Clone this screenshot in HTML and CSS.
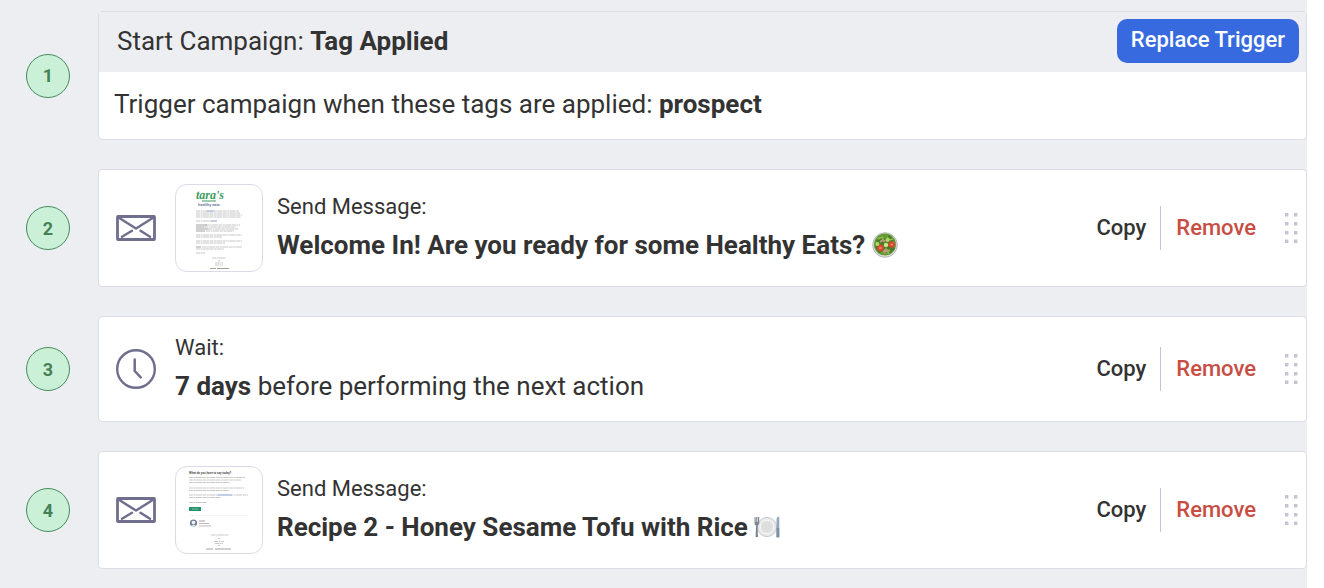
FILE: index.html
```html
<!DOCTYPE html>
<html lang="en">
<head>
  <meta charset="UTF-8">
  <meta name="viewport" content="width=device-width, initial-scale=1.0">
  <title>Campaign Steps</title>
  <link rel="stylesheet" href="styles.css">
</head>
<body>
  <!-- Shared icons -->
  <svg class="sprite" width="0" height="0" aria-hidden="true">
    <symbol id="icon-mail" viewBox="0 0 40 40">
      <rect x="1.5" y="8.5" width="37" height="23" rx="0.5" fill="none" stroke="#706e8e" stroke-width="2.8"/>
      <path d="M2.5 9.5L20 20.5L37.5 9.5M6 28.8L16 22.8M34 28.8L24.5 22.8" fill="none" stroke="#706e8e" stroke-width="2.5" stroke-linecap="round" stroke-linejoin="round"/>
    </symbol>
    <symbol id="icon-clock" viewBox="0 0 40 40">
      <circle cx="20" cy="20" r="18.8" fill="none" stroke="#706e8e" stroke-width="2.4"/>
      <path d="M18.7 10.5V22L24.7 28.3" fill="none" stroke="#706e8e" stroke-width="2.5" stroke-linecap="round" stroke-linejoin="round"/>
    </symbol>
    <symbol id="icon-grip" viewBox="0 0 14 32">
      <path d="M1 1h3.4v3.4h-3.4zM10 1h3.4v3.4h-3.4zM1 10h3.4v3.4h-3.4zM10 10h3.4v3.4h-3.4zM1 19h3.4v3.4h-3.4zM10 19h3.4v3.4h-3.4zM1 27.6h3.4v3.4h-3.4zM10 27.6h3.4v3.4h-3.4z" fill="#c5c4d6"/>
    </symbol>
  </svg>

  <main class="page">
    <ol class="steps">
      <li class="step">
        <span class="step-number">1</span>
        <section class="card">
          <div class="card-header">
            <h2 class="trigger-title">Start Campaign: <strong>Tag Applied</strong></h2>
            <button type="button" class="replace-btn">Replace Trigger</button>
          </div>
          <p class="card-body">Trigger campaign when these tags are applied: <strong>prospect</strong></p>
        </section>
      </li>

      <li class="step">
        <span class="step-number">2</span>
        <section class="card action">
          <svg class="icon" aria-hidden="true"><use href="#icon-mail"/></svg>
          <svg class="thumb" viewBox="0 0 86 86" role="img" aria-label="Message preview">
            <text class="thumb-logo" x="20" y="14">tara's</text>
            <path d="M26 16H40" stroke="#3d9b62" stroke-width="1"/>
            <text class="thumb-tagline" x="22" y="21">healthy eats</text>
            <g stroke="#c6c6c6" stroke-width="1" stroke-dasharray="4 .5 2 .4 6 .5">
              <path d="M20 26H63M20 28H64M20 30H66M20 32H65"/>
              <path d="M20 36H41M29 40H64M28 42H60M32 44H62M30 46H58"/>
              <path d="M20 50H66M20 52H46M20 56H66M20 58H49M26 62H66M20 64H48M20 68H29"/>
              <path d="M36 73H50M42 76H44M39 78H47M39 80H47"/>
            </g>
            <path d="M20 40H31M20 42H28M20 44H32M20 46H29M20 62H25M34 83.5H40M41 83.5H53" stroke="#a2a2a2" stroke-width="1"/>
            <path d="M31 26H38M35 36H41" stroke="#9db4e6" stroke-width="1"/>
          </svg>
          <div class="action-text">
            <p class="action-type">Send Message:</p>
            <p class="action-title">
              <strong>Welcome In! Are you ready for some Healthy Eats?</strong>
              <svg class="emoji" viewBox="0 0 26 26" role="img" aria-label="Green salad">
                <circle cx="13" cy="13" r="12.3" fill="#d9dcde" stroke="#b5b8ba" stroke-width="1"/>
                <circle cx="13" cy="12.5" r="11" fill="#679c35"/>
                <path d="M4 9L9 4L13 7L17 3L22 8L19 12L23 17L17 22L12 19L7 21L3 15L7 12Z" fill="#477b28"/>
                <path d="M6 7L10 5L12 9M15 5L18 8L21 7M11 20L14 17L17 22" fill="none" stroke="#91bd50" stroke-width="1.5"/>
                <path d="M8 10L11 8L13 10M12 21Q14 17 18 19" fill="none" stroke="#b69b78" stroke-width="2"/>
                <circle cx="8.5" cy="16" r="3.4" fill="#d84732"/>
                <circle cx="19.7" cy="12.5" r="3.3" fill="#d84732"/>
                <path d="M7 16H10M18.5 12.5H21" stroke="#f18b70" stroke-width="1.3"/>
                <circle cx="14" cy="13" r="2.2" fill="#c8e986"/>
                <circle cx="5.5" cy="12" r="1.9" fill="#b3da69"/>
                <circle cx="15.5" cy="8" r="2" fill="#b3da69"/>
              </svg>
            </p>
          </div>
          <div class="action-buttons">
            <button type="button" class="copy-btn">Copy</button>
            <button type="button" class="remove-btn">Remove</button>
          </div>
          <svg class="grip" aria-hidden="true"><use href="#icon-grip"/></svg>
        </section>
      </li>

      <li class="step">
        <span class="step-number">3</span>
        <section class="card action">
          <svg class="icon" aria-hidden="true"><use href="#icon-clock"/></svg>
          <div class="action-text">
            <p class="action-type">Wait:</p>
            <p class="action-title"><strong>7 days</strong> before performing the next action</p>
          </div>
          <div class="action-buttons">
            <button type="button" class="copy-btn">Copy</button>
            <button type="button" class="remove-btn">Remove</button>
          </div>
          <svg class="grip" aria-hidden="true"><use href="#icon-grip"/></svg>
        </section>
      </li>

      <li class="step">
        <span class="step-number">4</span>
        <section class="card action">
          <svg class="icon" aria-hidden="true"><use href="#icon-mail"/></svg>
          <svg class="thumb" viewBox="0 0 86 86" role="img" aria-label="Message preview">
            <text class="thumb-heading" x="13" y="7">What do you have to say today?</text>
            <g stroke="#c8c8c8" stroke-width="1" stroke-dasharray="4 .5 2 .4 6 .5">
              <path d="M13 10.5H69M13 13H65M13 15.5H54M13 21H68M13 23.5H53M13 28H72M13 30.5H45M13 35.5H31"/>
              <path d="M35 68H52M42 71.5H44M38 74.5H48M39 76.5H47M42 78.5H44"/>
            </g>
            <path d="M42 28H56" stroke="#9db4e6" stroke-width="1"/>
            <rect x="13" y="40" width="12" height="4" rx="0.5" fill="#24936a"/>
            <path d="M16 42H22" stroke="#8fcab3" stroke-width="0.8"/>
            <path d="M13 48.5H72" stroke="#eeeeee" stroke-width="0.6"/>
            <circle cx="17.5" cy="56" r="3.6" fill="#73849a"/>
            <circle cx="17.5" cy="55.5" r="1.8" fill="#f4f4f5"/>
            <path d="M15 59Q17.5 56.5 20 59" fill="#e0e4e9"/>
            <path d="M23 54H29M30 82H37M39 82H55" stroke="#a2a2a2" stroke-width="1"/>
            <path d="M23 56.5H33M23 59H35" stroke="#bbb" stroke-width="1"/>
          </svg>
          <div class="action-text">
            <p class="action-type">Send Message:</p>
            <p class="action-title">
              <strong>Recipe 2 - Honey Sesame Tofu with Rice</strong>
              <svg class="emoji" viewBox="0 0 26 26" role="img" aria-label="Fork and knife with plate">
                <circle cx="13" cy="13" r="9.6" fill="#e9e9e9" stroke="#c9cacb" stroke-width="1"/>
                <circle cx="13" cy="13" r="6.6" fill="#dededf" stroke="#f9f9f9" stroke-width="1"/>
                <path d="M0.5 3V9Q0.5 11 2 11.5L1.6 23H4L3.6 11.5Q5.2 11 5.2 9V3H4V8H3.4V3H2.2V8H1.6V3Z" fill="#7c8794"/>
                <path d="M22.5 23V5Q22.7 2.5 25.3 2.5V23Z" fill="#94a8bd"/>
                <path d="M22.5 14H25.3V23.5H22.5Z" fill="#7b8fa5"/>
              </svg>
            </p>
          </div>
          <div class="action-buttons">
            <button type="button" class="copy-btn">Copy</button>
            <button type="button" class="remove-btn">Remove</button>
          </div>
          <svg class="grip" aria-hidden="true"><use href="#icon-grip"/></svg>
        </section>
      </li>
    </ol>
  </main>
</body>
</html>
```
FILE: styles.css
```css
/* General Styles */
* {
  box-sizing: border-box;
}

body {
  margin: 0;
  background-color: #fff;
  color: #333;
  font-family: Roboto, "Liberation Sans", sans-serif;
  font-size: 26px;
}

h2, p {
  margin: 0;
  font-size: 26px;
  font-weight: 400;
}

strong {
  font-weight: 700;
}

button {
  border: none;
  background: none;
  font-family: inherit;
  font-size: 22px;
  font-weight: 500;
  cursor: pointer;
}

.sprite {
  display: block;
}

.page {
  min-height: 100vh;
  margin-right: 17px;
  padding: 11px 0 18px;
  background-color: #edeef2;
}

/* Steps */
.steps {
  display: flex;
  flex-direction: column;
  gap: 29px;
  margin: 0;
  padding: 0;
  list-style: none;
}

.step {
  display: flex;
  align-items: center;
  gap: 28px;
  padding-left: 26px;
}

.step-number {
  display: flex;
  flex-shrink: 0;
  justify-content: center;
  align-items: center;
  width: 44px;
  height: 44px;
  border: 1px solid #458c5b;
  border-radius: 50%;
  background-color: #cbf0d8;
  color: #458057;
  font-size: 18px;
  font-weight: 700;
}

/* Cards */
.card {
  flex: 1;
  min-width: 0;
  border: 1px solid #dcdde7;
  border-radius: 4px;
  background-color: #fff;
}

.card-header {
  display: flex;
  justify-content: space-between;
  align-items: center;
  padding: 7px 7px 9px 18px;
  background-color: #edeef2;
}

.card-body {
  padding: 12px 15px 15px;
  line-height: 40px;
}

.replace-btn {
  height: 44px;
  padding: 0 14px 4px;
  border-radius: 10px;
  background-color: #386adf;
  color: #fff;
}

.action {
  display: flex;
  align-items: center;
  padding: 14px 8px 14px 17px;
}

.icon {
  flex-shrink: 0;
  width: 40px;
  height: 40px;
  margin-right: 19px;
}

.thumb {
  flex-shrink: 0;
  width: 88px;
  height: 88px;
  margin-right: 14px;
  border: 1px solid #dcdae8;
  border-radius: 12px;
}

.thumb-logo {
  fill: #3d9b62;
  font-family: "Liberation Serif", serif;
  font-size: 12px;
  font-style: italic;
  font-weight: 700;
}

.thumb-tagline {
  fill: #71809a;
  font-size: 4px;
  font-weight: 700;
}

.thumb-heading {
  fill: #555;
  font-size: 3px;
  font-weight: 700;
}

.action-text {
  flex: 1;
  min-width: 0;
}

.action-type {
  font-size: 22px;
  line-height: 34px;
}

.action-title {
  line-height: 42px;
}

.emoji {
  width: 26px;
  height: 26px;
  vertical-align: -4px;
}

/* Action buttons */
.action-buttons {
  display: flex;
}

.copy-btn, .remove-btn {
  height: 44px;
  padding: 0 14px 2px;
}

.copy-btn {
  border-right: 1px solid #c1c4d4;
  color: #333;
}

.remove-btn {
  padding-left: 15px;
  color: #c84e44;
}

.grip {
  flex-shrink: 0;
  width: 14px;
  height: 32px;
  margin-left: 14px;
}
```
